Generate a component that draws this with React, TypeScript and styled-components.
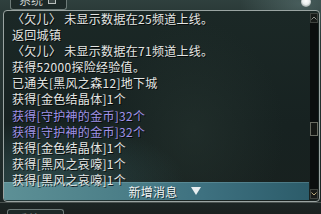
import React from 'react'
import styled, { createGlobalStyle } from 'styled-components'

const GlobalStyle = createGlobalStyle`
  html, body {
    margin: 0;
    padding: 0;
    background: #1c2725;
  }
`

const Scene = styled.div`
  width: 321px;
  height: 214px;
  overflow: hidden;
  display: flex;
  flex-direction: column;
  font-family: 'Noto Sans CJK SC', 'Noto Sans', sans-serif;
  background:
    radial-gradient(ellipse 60px 40px at 300px 4px, rgba(120, 150, 150, 0.35), transparent),
    linear-gradient(180deg, #2f403e 0px, #2b3b39 10px, #1c2625 200px, #1a201f 214px);
`

const TopStrip = styled.div`
  height: 10px;
  flex: none;
  display: flex;
  align-items: flex-end;
  justify-content: space-between;
  padding: 0 10px 0 10px;
  overflow: hidden;
`

const Tab = styled.div<{ $down?: boolean }>`
  height: 18px;
  width: 57px;
  box-sizing: border-box;
  display: flex;
  align-items: center;
  gap: 5px;
  padding-left: 8px;
  background: #1d2928;
  border: 1px solid #6d7a78;
  border-radius: 3px 3px 0 0;
  color: #c9cfcd;
  font-size: 12px;
  line-height: 12px;
  ${({ $down }) =>
    $down
      ? 'margin-top: 6px; border-bottom: none; color: #7d8482;'
      : 'border-top: none; border-radius: 0 0 3px 3px; padding-bottom: 1px;'}
`

const TabIcon = styled.span`
  width: 6px;
  height: 6px;
  border: 1px solid #b8bebc;
  background: #3a4544;
`

const CornerKnob = styled.div`
  width: 10px;
  height: 10px;
  margin-bottom: 3px;
  border-radius: 50%;
  background: radial-gradient(circle at 50% 40%, #ffffff 0, #e8ecec 45%, #8a9694 80%);
`

const Panel = styled.div`
  position: relative;
  height: 192px;
  flex: none;
  margin: 0 1px 0 3px;
  box-sizing: border-box;
  border: 1px solid #9aa4a2;
  border-radius: 4px;
  display: flex;
  overflow: hidden;
  background:
    radial-gradient(ellipse 140px 60px at 40px 170px, rgba(70, 120, 124, 0.45), transparent),
    radial-gradient(ellipse 90px 110px at 190px 120px, rgba(40, 55, 50, 0.5), transparent),
    linear-gradient(180deg, #1b2826 0%, #172221 60%, #18211f 100%);
`

const Log = styled.div`
  position: relative;
  z-index: 1;
  flex: 1;
  padding: 0 0 0 8px;
`

const Line = styled.div<{ $tone?: 'purple' }>`
  height: 16.1px;
  line-height: 16px;
  font-size: 12px;
  letter-spacing: 0.3px;
  white-space: nowrap;
  color: ${({ $tone }) => ($tone === 'purple' ? '#a092e8' : '#e4e6e4')};
  text-shadow: 1px 1px 0 rgba(0, 0, 0, 0.75);
`

const Scrollbar = styled.div`
  position: relative;
  z-index: 1;
  width: 8px;
  flex: none;
  margin: 2px 1px 2px 0;
  background: #0b0e0e;
  display: flex;
  flex-direction: column;
  justify-content: space-between;
`

const ScrollTrack = styled.div`
  flex: 1;
  position: relative;
`

const Thumb = styled.div`
  position: absolute;
  top: 99px;
  left: 0;
  width: 8px;
  height: 14px;
  box-sizing: border-box;
  border: 1px solid #6a6c62;
  background: #151714;
`

const ArrowButton = styled.div<{ $color: string }>`
  width: 8px;
  height: 10px;
  box-sizing: border-box;
  border: 1px solid #3e423e;
  background: #171a18;
  display: flex;
  align-items: center;
  justify-content: center;
  color: ${({ $color }) => $color};
`

const NewBar = styled.div`
  position: absolute;
  z-index: 0;
  left: 0;
  right: 10px;
  bottom: 1px;
  height: 18px;
  background: linear-gradient(90deg, #5d9096 0%, #4d8089 35%, #3e7180 65%, #2c5c6a 100%);
  box-shadow: inset 0 1px 0 rgba(160, 200, 205, 0.25);
  display: flex;
  align-items: center;
  justify-content: center;
  gap: 13px;
  padding-left: 16px;
  color: #f2f4f4;
  font-size: 12px;
  letter-spacing: 0.3px;
  text-shadow: 1px 1px 0 rgba(0, 0, 0, 0.6);
`

const BarLabel = styled.div`
  position: relative;
  z-index: 2;
`

const BottomStrip = styled.div`
  flex: 1;
  padding: 0 0 0 7px;
  overflow: hidden;
  border-top: 1px solid #4a5250;
`

const Chevron = ({ up }: { up?: boolean }) => (
  <svg width="6" height="4" viewBox="0 0 6 4">
    <path d={up ? 'M0.5 3.5 L3 1 L5.5 3.5' : 'M0.5 0.5 L3 3 L5.5 0.5'} stroke="currentColor" strokeWidth="1" fill="none" />
  </svg>
)

const Triangle = () => (
  <svg width="10" height="8" viewBox="0 0 10 8">
    <path d="M0 0 H10 L5 8 Z" fill="#e8eef0" />
  </svg>
)

const lines: { text: string; tone?: 'purple' }[] = [
  { text: '〈欠儿〉 未显示数据在25频道上线。' },
  { text: '返回城镇' },
  { text: '〈欠儿〉 未显示数据在71频道上线。' },
  { text: '获得52000探险经验值。' },
  { text: '已通关[黑风之森12]地下城' },
  { text: '获得[金色结晶体]1个' },
  { text: '获得[守护神的金币]32个', tone: 'purple' },
  { text: '获得[守护神的金币]32个', tone: 'purple' },
  { text: '获得[金色结晶体]1个' },
  { text: '获得[黑风之哀嚎]1个' },
  { text: '获得[黑风之哀嚎]1个' },
]

const App = () => (
  <>
    <GlobalStyle />
    <Scene>
      <TopStrip>
        <Tab>
          系统
          <TabIcon />
        </Tab>
        <CornerKnob />
      </TopStrip>
      <Panel>
        <Log>
          {lines.map((line, i) => (
            <Line key={i} $tone={line.tone}>
              {line.text}
            </Line>
          ))}
        </Log>
        <Scrollbar>
          <ArrowButton $color="#8d918c">
            <Chevron up />
          </ArrowButton>
          <ScrollTrack>
            <Thumb />
          </ScrollTrack>
          <ArrowButton $color="#b8a878">
            <Chevron />
          </ArrowButton>
        </Scrollbar>
        <NewBar>
          <BarLabel>新增消息</BarLabel>
          <Triangle />
        </NewBar>
      </Panel>
      <BottomStrip>
        <Tab $down>系统</Tab>
      </BottomStrip>
    </Scene>
  </>
)

export default App
